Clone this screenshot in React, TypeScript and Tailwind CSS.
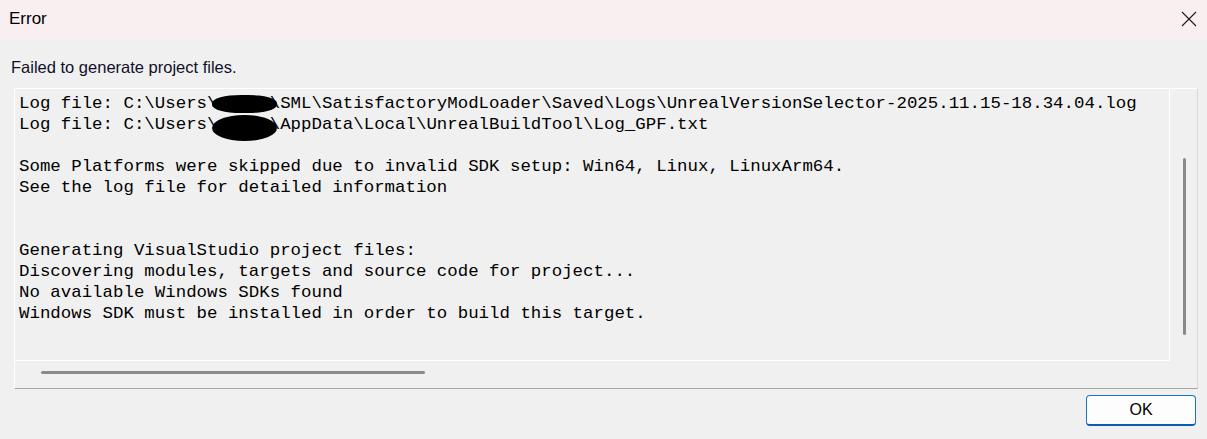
import React from "react";

// Fenêtre d'erreur façon Windows 11
const uiFont = "font-['Liberation_Sans',Arial,sans-serif]";
const monoFont = "font-['Liberation_Mono','Courier_New',monospace]";

const Redacted: React.FC<{ tall?: boolean }> = ({ tall }) => (
  <span className="relative">
    <span className="text-transparent">xxxxx</span>
    <span
      className={
        tall
          ? "absolute -left-[5px] -right-[7px] top-[1px] -bottom-[7px] rounded-[50%] bg-black"
          : "absolute -left-[5px] -right-[7px] top-[2px] bottom-[0px] rounded-[45%] bg-black"
      }
    />
  </span>
);

const lines: React.ReactNode[] = [
  <>
    Log file: C:\Users\
    <Redacted />
    \SML\SatisfactoryModLoader\Saved\Logs\UnrealVersionSelector-2025.11.15-18.34.04.log
  </>,
  <>
    Log file: C:\Users\
    <Redacted tall />
    \AppData\Local\UnrealBuildTool\Log_GPF.txt
  </>,
  "",
  "Some Platforms were skipped due to invalid SDK setup: Win64, Linux, LinuxArm64.",
  "See the log file for detailed information",
  "",
  "",
  "Generating VisualStudio project files:",
  "Discovering modules, targets and source code for project...",
  "No available Windows SDKs found",
  "Windows SDK must be installed in order to build this target.",
];

export default function App() {
  return (
    <div className={`flex h-[439px] w-[1207px] flex-col bg-[#f0f0f0] ${uiFont}`}>
      {/* barre de titre */}
      <div className="flex h-[40px] items-center justify-between bg-[#f9eff0] pl-[9px] pr-[10px]">
        <span className="mt-[-3px] text-[17px] text-black">Error</span>
        <svg width="16" height="16" viewBox="0 0 16 16" className="mt-[-2px]">
          <path d="M1 1L15 15M15 1L1 15" stroke="#1a1a1a" strokeWidth="1.1" fill="none" />
        </svg>
      </div>

      <p className="mt-[17px] pl-[11px] text-[16.5px] leading-[20px] text-[#10102a]">
        Failed to generate project files.
      </p>

      {/* zone de texte avec barres de défilement */}
      <div className="ml-[14px] mt-[11px] grid h-[301px] w-[1184px] grid-cols-[1fr_27px] grid-rows-[1fr_27px] border-b border-l border-r border-t border-b-[#a6a6a6] border-l-white border-r-[#d8d8d8] border-t-white">
        <div className="overflow-hidden border-b border-r border-white pl-[4px] pt-[4px]">
          <div className={`text-[17.42px] leading-[21px] text-black ${monoFont}`}>
            {lines.map((line, i) => (
              <div key={i} className="h-[21px] whitespace-pre">
                {line}
              </div>
            ))}
          </div>
        </div>
        <div className="flex justify-center pl-[1px] pt-[69px]">
          <div className="h-[177px] w-[3px] rounded-full bg-[#8a8a8a]" />
        </div>
        <div className="pl-[26px] pt-[10px]">
          <div className="h-[3px] w-[384px] rounded-full bg-[#8a8a8a]" />
        </div>
        <div />
      </div>

      {/* bouton */}
      <div className="flex justify-end pr-[11px] pt-[6px]">
        <button className="h-[31px] w-[110px] rounded-[4px] border border-b-2 border-[#1a73c9] border-b-[#0a5cb0] bg-[#fdfdfd] text-[16px] text-black">
          OK
        </button>
      </div>
    </div>
  );
}
